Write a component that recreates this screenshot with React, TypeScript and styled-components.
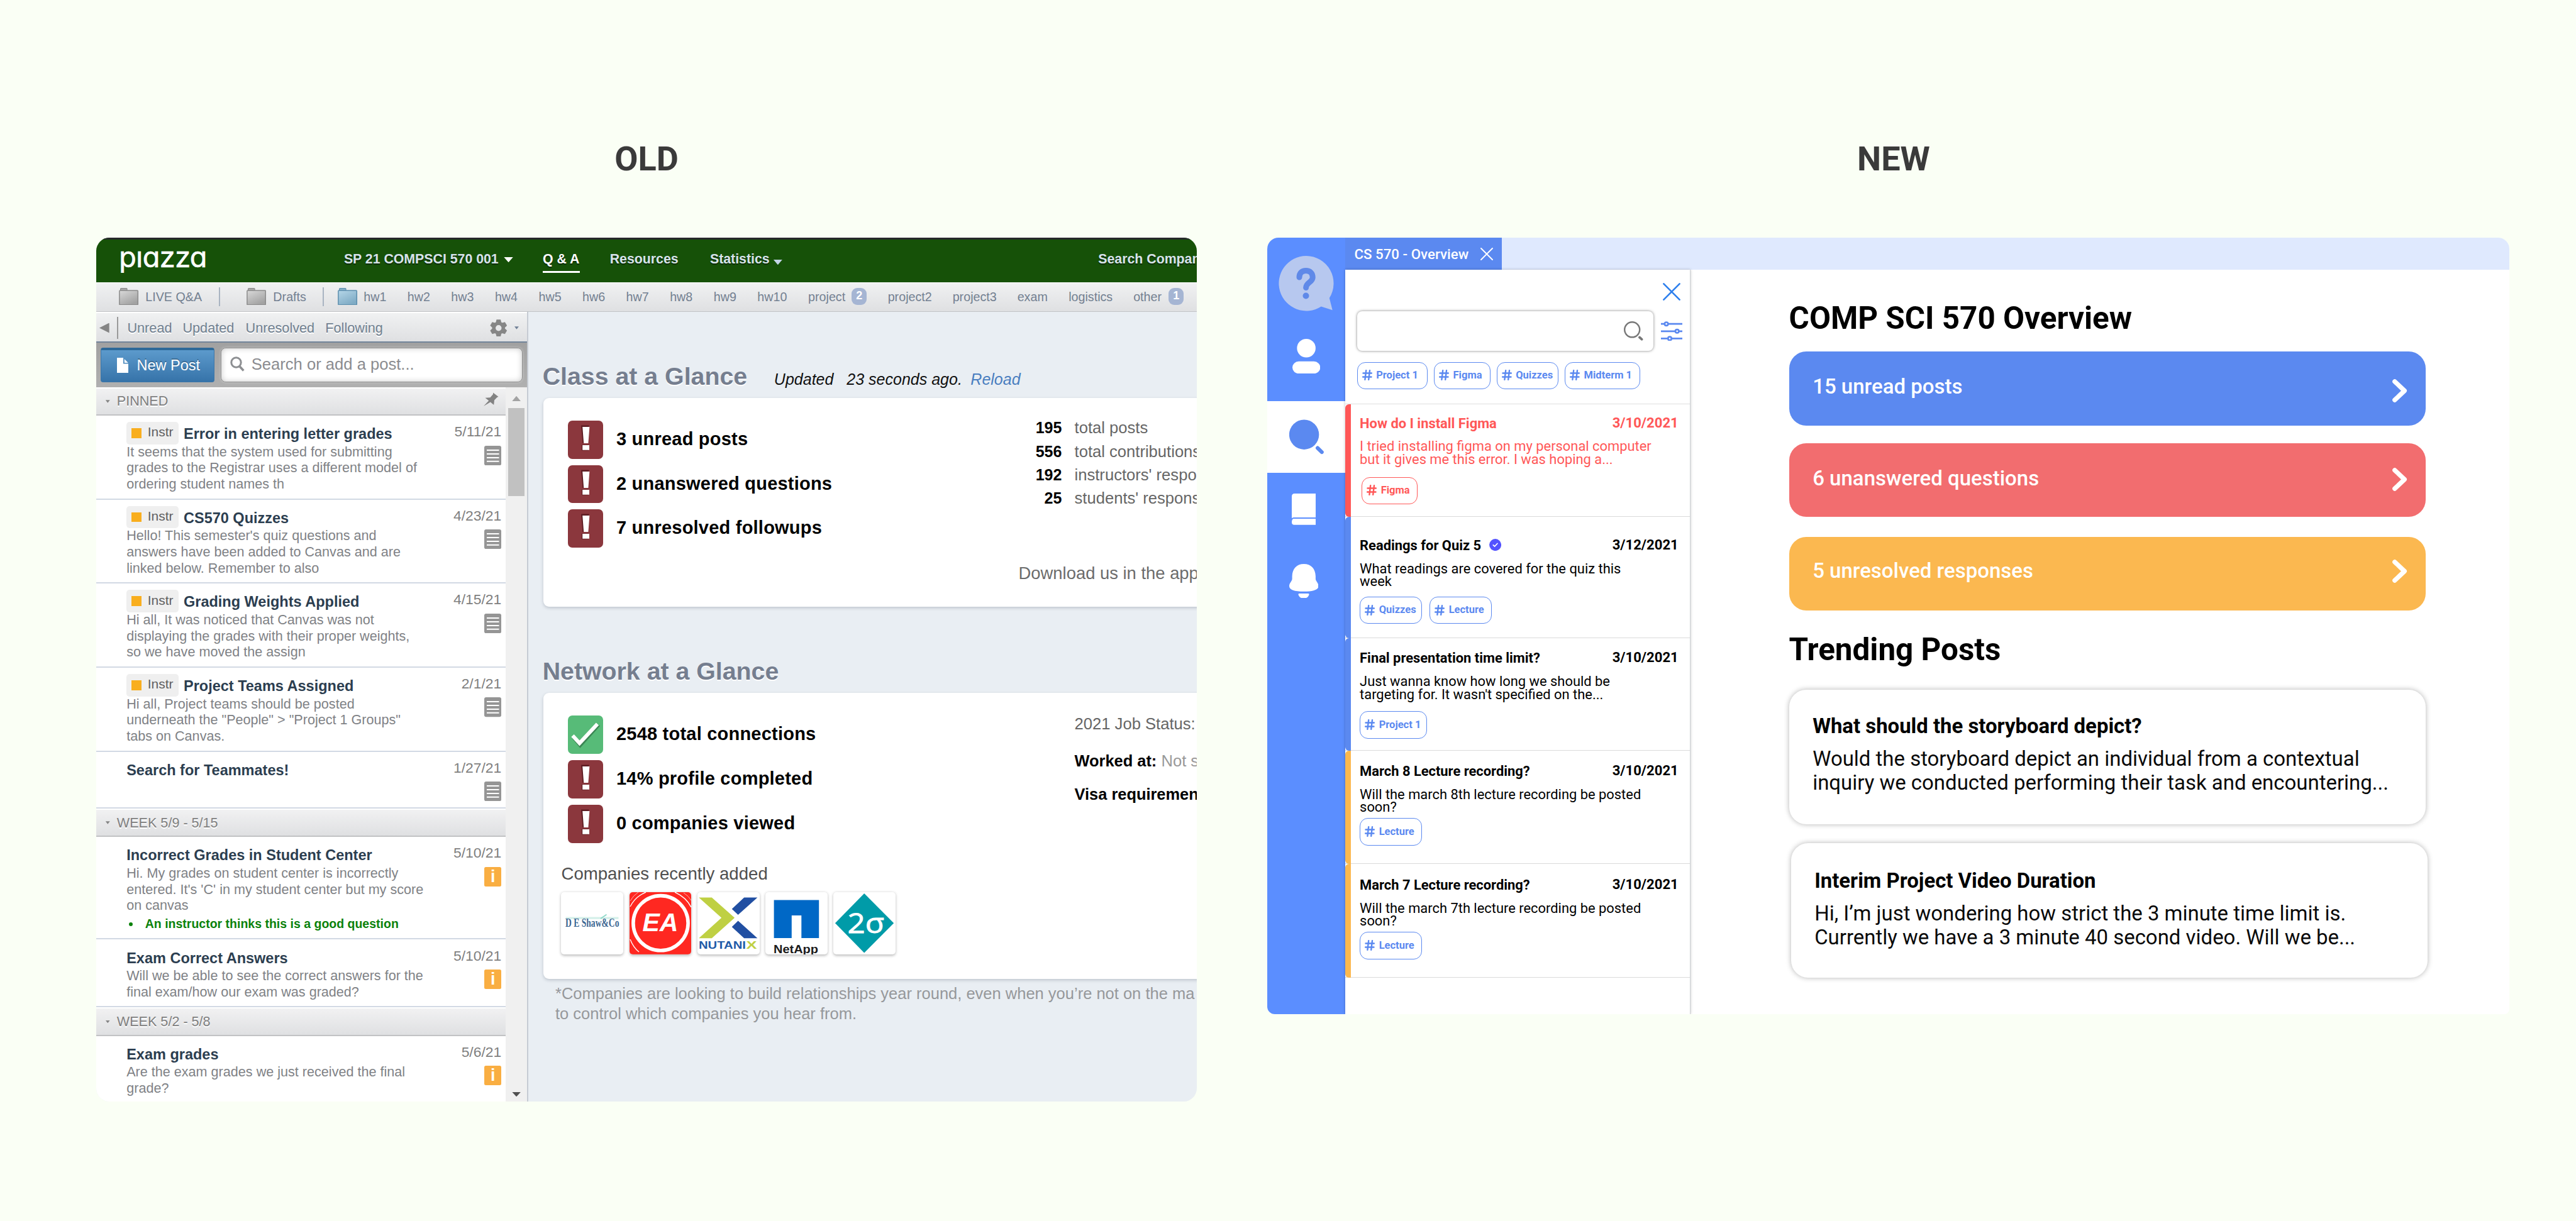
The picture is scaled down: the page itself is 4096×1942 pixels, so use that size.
import React from "react";
import styled, { createGlobalStyle } from "styled-components";

const arial = `"Liberation Sans", Arial, Helvetica, sans-serif`;
const roboto = `Roboto, "Open Sans", sans-serif`;

const GlobalStyle = createGlobalStyle`
  *, *::before, *::after { box-sizing: border-box; }
  html, body { margin: 0; padding: 0; background: #fafff5; }
  svg { display: block; flex: none; }
`;

/* ---------- page ---------- */

const Page = styled.main`
  width: 4096px;
  height: 1942px;
  overflow: hidden;
  background: #fafff5;
  display: flex;
  gap: 112.5px;
  padding: 221.3px 0 0 153.4px;
`;

const Column = styled.section<{ $w: number }>`
  width: ${(p) => p.$w}px;
  flex: none;
`;

const ColumnTitle = styled.h1<{ $shift?: number }>`
  margin: 0 0 93.1px;
  padding-left: ${(p) => p.$shift ?? 0}px;
  font: 700 54px/64px ${roboto};
  color: #3a3a3a;
  text-align: center;
`;

/* ---------- old panel ---------- */

const OldPanel = styled.div`
  height: 1373.9px;
  border-radius: 21px;
  overflow: hidden;
  background: #e9eef3;
  font-family: ${arial};
  display: flex;
  flex-direction: column;
`;

const GreenBar = styled.header`
  height: 70.7px;
  flex: none;
  border-top: 3.9px solid #26292b;
  background: #165108;
  display: flex;
  align-items: flex-start;
  padding-left: 35.9px;
  font: 700 21.3px/63.6px ${arial};
  color: #d7e3ea;
  white-space: nowrap;
  text-shadow: 0 2px 1px rgba(0, 0, 0, 0.45);
`;

const Logo = styled.div`
  width: 357.6px;
  flex: none;
  font: 400 45px/55.4px Inter, sans-serif;
  font-feature-settings: "cv11";
  letter-spacing: -0.5px;
  color: #fff;
  -webkit-text-stroke: 0.6px #fff;
  text-shadow: none;
`;

const NavItem = styled.div<{ $w?: number; $active?: boolean }>`
  flex: none;
  position: relative;
  ${(p) => p.$w && `width: ${p.$w}px;`}
  ${(p) =>
    p.$active &&
    `color: #fff;
     &::after {
       content: "";
       position: absolute;
       left: 0;
       top: 49.2px;
       width: 58.5px;
       height: 3.8px;
       background: #fff;
     }`}
`;

const Caret = styled.span<{ $w: number; $h: number; $color: string; $mt?: number; $mr?: number }>`
  flex: none;
  width: ${(p) => p.$w}px;
  height: ${(p) => p.$h}px;
  margin-top: ${(p) => p.$mt ?? 0}px;
  margin-right: ${(p) => p.$mr ?? 0}px;
  background: ${(p) => p.$color};
  clip-path: polygon(0 0, 100% 0, 50% 100%);
`;

const SearchCompanies = styled(NavItem)`
  margin-left: auto;
  width: 156.6px;
  overflow: hidden;
`;

const FolderBar = styled.nav`
  height: 46.9px;
  flex: none;
  border-top: 1.9px solid #fcfdfd;
  border-bottom: 1.9px solid #c1c3c6;
  background: linear-gradient(#f0f1f2, #dfe0e2);
  display: flex;
  align-items: center;
  padding: 0 0 2px 36.1px;
  font: 400 19.7px/24px ${arial};
  color: #738091;
  white-space: nowrap;
`;

const Cell = styled.div<{ $w: number }>`
  width: ${(p) => p.$w}px;
  flex: none;
`;

const Separator = styled.i`
  display: block;
  width: 2px;
  height: 30px;
  background: #a9b4c2;
`;

const CountBadge = styled.span`
  display: block;
  width: 24px;
  height: 27.3px;
  border-radius: 9px;
  background: #a5b5d3;
  color: #fff;
  font: 700 18px/25px ${arial};
  text-align: center;
`;

const OldBody = styled.div`
  flex: 1;
  min-height: 0;
  display: flex;
`;

const Sidebar = styled.aside`
  width: 686.4px;
  flex: none;
  border-right: 2px solid #c6cbd3;
  background: #fff;
  display: flex;
  flex-direction: column;
`;

const FilterBar = styled.div`
  height: 49.1px;
  flex: none;
  border-top: 2px solid #fff;
  border-bottom: 2px solid #72859a;
  background: linear-gradient(#f0f1f2, #dfe0e2);
  display: flex;
  align-items: center;
  padding: 2px 0 0 4.5px;
  font: 400 21.7px/26px ${arial};
  color: #708090;
  text-shadow: 0 1.8px 0 #fff;
  white-space: nowrap;
`;

const BackArrow = styled.span`
  display: block;
  width: 15.8px;
  height: 16px;
  background: #858585;
  clip-path: polygon(100% 0, 100% 100%, 0 50%);
`;

const FilterDivider = styled.i`
  display: block;
  width: 1.8px;
  height: 35.5px;
  background: #9a9a9a;
`;

const SearchRow = styled.div`
  height: 70.7px;
  flex: none;
  background: linear-gradient(#a1a1a1, #b0b0b0);
  display: flex;
  align-items: center;
  gap: 10.9px;
  padding-left: 6.7px;
`;

const NewPost = styled.button`
  width: 180.5px;
  height: 55px;
  border: 1.8px solid #3a75a8;
  border-top: 4px solid #2d6998;
  border-radius: 4px;
  background: linear-gradient(#5c9acc, #3673a9);
  display: flex;
  align-items: center;
  gap: 13px;
  padding: 0 0 2px 25.4px;
  font: 400 23.5px/30px ${arial};
  color: #fff;
  text-shadow: 0 -1.8px 0 rgba(0, 0, 0, 0.25);
  white-space: nowrap;
`;

const PostSearch = styled.div`
  width: 479.2px;
  height: 54.4px;
  border: 1.8px solid #8f8f8f;
  border-radius: 8px;
  background: #fff;
  box-shadow: inset 0 0 10px rgba(0, 0, 0, 0.22), 0 0 4px rgba(255, 255, 255, 0.35);
  display: flex;
  align-items: center;
  gap: 11.2px;
  padding: 0 0 2px 13.1px;
  font: 400 25.6px/30px ${arial};
  color: #8b8c90;
  white-space: nowrap;
`;

const ListArea = styled.div`
  flex: 1;
  min-height: 0;
  display: flex;
`;

const PostList = styled.div`
  width: 651.1px;
  flex: none;
  overflow: hidden;
`;

const ScrollTrack = styled.div`
  flex: 1;
  background: #f0f0f0;
  display: flex;
  flex-direction: column;
  align-items: center;
  padding: 14px 0 8px;
`;

const ScrollThumb = styled.div`
  width: 25.3px;
  height: 139.5px;
  margin-top: 11px;
  background: #c1c1c1;
`;

const UpArrow = styled.span`
  width: 14px;
  height: 8.4px;
  background: #a3a3a3;
  clip-path: polygon(50% 0, 100% 100%, 0 100%);
`;

const DownArrow = styled.span`
  width: 14px;
  height: 7.6px;
  margin-top: auto;
  background: #505050;
  clip-path: polygon(0 0, 100% 0, 50% 100%);
`;

const SectionHeader = styled.div`
  height: 45.4px;
  border-top: 2.4px solid #fff;
  border-bottom: 2px solid #c1c2c4;
  background: linear-gradient(#f1f1f2, #dfe0e2);
  display: flex;
  align-items: center;
  gap: 11px;
  padding: 0 10.8px 0 14.4px;
  font: 400 21.6px/26px ${arial};
  color: #808080;
  text-shadow: 0 1.8px 0 #fff;
  white-space: nowrap;
`;

const PinSlot = styled.span`
  margin-left: auto;
  margin-top: -6px;
`;

const PostItem = styled.article<{ $h: number }>`
  height: ${(p) => p.$h}px;
  border-bottom: 2px solid #d2d9e4;
  display: flex;
  justify-content: space-between;
  padding: 10.1px 7.2px 0 47.8px;
`;

const PostTitleRow = styled.div`
  height: 34.6px;
  display: flex;
  align-items: flex-start;
  gap: 8px;
`;

const PostTitle = styled.h3`
  margin: 0;
  font: 700 23.5px/38.2px ${arial};
  color: #2c3e50;
  white-space: nowrap;
`;

const InstrBadge = styled.span`
  width: 82.8px;
  height: 35.5px;
  border-radius: 5px;
  background: #efefef;
  display: flex;
  align-items: center;
  gap: 10px;
  padding: 0 0 3px 7.7px;
  font: 400 21px/26px ${arial};
  color: #606060;
  &::before {
    content: "";
    width: 15.8px;
    height: 15.8px;
    margin-top: 3px;
    background: #f9ae1e;
  }
`;

const Snippet = styled.div`
  font: 400 21.6px/25.6px ${arial};
  color: #808286;
  white-space: nowrap;
`;

const Endorsement = styled.div`
  margin-top: 4.3px;
  display: flex;
  align-items: center;
  gap: 20px;
  padding-left: 3.6px;
  font: 700 19.5px/25px ${arial};
  color: #0b820b;
  white-space: nowrap;
  &::before {
    content: "";
    width: 6px;
    height: 6px;
    border-radius: 3px;
    background: #0b820b;
  }
`;

const PostMeta = styled.div`
  display: flex;
  flex-direction: column;
  align-items: flex-end;
  gap: 6.6px;
  font: 400 22.9px/30.7px ${arial};
  color: #808080;
`;

const InfoBadge = styled.span`
  width: 27.1px;
  height: 31px;
  border-radius: 2.5px;
  background: #f9ae42;
  color: #fff;
  font: 700 27px/30px ${arial};
  text-align: center;
`;

const Content = styled.section`
  flex: 1;
  min-width: 0;
  overflow: hidden;
  padding: 78.6px 0 0 23.9px;
`;

const GlanceHead = styled.div<{ $mt?: number }>`
  margin-top: ${(p) => p.$mt ?? 0}px;
  margin-bottom: 12.5px;
  display: flex;
  align-items: baseline;
  height: 46px;
  font: italic 400 25px/46px ${arial};
  color: #111;
  white-space: nowrap;
`;

const GlanceTitle = styled.h2`
  margin: 0 0 0 -1px;
  width: 368.2px;
  font: 700 39.3px/46px ${arial};
  color: #757e8f;
  text-shadow: 0 2px 0 #fff;
`;

const Reload = styled.a`
  color: #4a7ec0;
`;

const Card = styled.div<{ $h: number }>`
  width: 1100px;
  height: ${(p) => p.$h}px;
  border-radius: 9px;
  background: #fff;
  box-shadow: 0 2px 5px rgba(60, 70, 90, 0.25);
`;

const CardTop = styled.div`
  display: flex;
  align-items: flex-start;
`;

const StatusList = styled.ul<{ $w: number }>`
  width: ${(p) => p.$w}px;
  flex: none;
  margin: 0;
  padding: 35.8px 0 0 39px;
  list-style: none;
  display: flex;
  flex-direction: column;
  gap: 10px;
`;

const StatusRow = styled.li`
  height: 60.8px;
  display: flex;
  align-items: center;
  gap: 20.9px;
`;

const StatusIcon = styled.span<{ $ok?: boolean }>`
  width: 56.4px;
  height: 60.8px;
  border-radius: 7px;
  background: ${(p) => (p.$ok ? "#57bb78" : "#8b373d")};
`;

const StatusText = styled.span`
  padding-bottom: 3px;
  font: 700 29px/36px ${arial};
  letter-spacing: 0.22px;
  color: #000;
  white-space: nowrap;
`;

const Stats = styled.div`
  padding-top: 29.4px;
  white-space: nowrap;
`;

const StatRow = styled.div`
  display: flex;
  gap: 20.2px;
  font: 400 25.6px/37.3px ${arial};
  color: #666;
`;

const StatValue = styled.b`
  width: 66.8px;
  font-size: 25px;
  color: #000;
  text-align: right;
`;

const Download = styled.p`
  margin: 80px 0 0 -2px;
  font: 400 27.4px/40px ${arial};
  color: #6c6c6c;
`;

const JobInfo = styled.div`
  padding-top: 28.8px;
  font: 400 25.6px/40px ${arial};
  color: #666;
  white-space: nowrap;
`;

const JobLine = styled.p<{ $mt?: number }>`
  margin: ${(p) => p.$mt ?? 0}px 0 0;
  b {
    color: #000;
    font-size: 25.4px;
  }
  span {
    color: #999;
  }
`;

const CompaniesTitle = styled.p`
  margin: 32.6px 0 11.4px 28.8px;
  font: 400 27.6px/34px ${arial};
  color: #505050;
`;

const Tiles = styled.div`
  display: flex;
  gap: 9.4px;
  padding-left: 28.8px;
`;

const Tile = styled.div`
  width: 98.8px;
  height: 98.9px;
  border-radius: 5px;
  overflow: hidden;
  background: #fff;
  box-shadow: 0 1.5px 4px rgba(0, 0, 0, 0.28);
`;

const Footnote = styled.p`
  margin: 8.2px 0 0 19.3px;
  font: 400 25.5px/31.8px ${arial};
  color: #96989b;
  white-space: nowrap;
`;

/* ---------- new panel ---------- */

const NewPanel = styled.div`
  height: 1234.6px;
  border-radius: 18px 18px 8px 12px;
  overflow: hidden;
  background: #fff;
  font-family: ${roboto};
  display: flex;
`;

const Rail = styled.nav`
  width: 123.2px;
  flex: none;
  background: #5b8eff;
  display: flex;
  flex-direction: column;
  padding-top: 29px;
`;

const RailItem = styled.div<{ $left: number; $mt?: number }>`
  padding-left: ${(p) => p.$left}px;
  margin-top: ${(p) => p.$mt ?? 0}px;
`;

const RailActive = styled.div`
  height: 114px;
  margin-top: 43.8px;
  padding: 29.8px 0 0 34.3px;
  background: #fff;
`;

const Workspace = styled.div`
  flex: 1;
  min-width: 0;
  display: flex;
  flex-direction: column;
`;

const TabBar = styled.div`
  height: 50.5px;
  flex: none;
  background: #dfe9fe;
  display: flex;
`;

const Tab = styled.div`
  width: 249.6px;
  background: #5b89f0;
  display: flex;
  align-items: center;
  gap: 19px;
  padding: 1px 0 0 14.8px;
  font: 500 22.3px/28px ${roboto};
  color: #fff;
  white-space: nowrap;
`;

const WorkBody = styled.div`
  flex: 1;
  min-height: 0;
  display: flex;
`;

const PostPanel = styled.aside`
  width: 549.2px;
  flex: none;
  border-right: 1.5px solid #cfd2d6;
  box-shadow: 0 0 4px rgba(0, 0, 0, 0.25);
  background: #fff;
`;

const PanelTop = styled.div`
  height: 214.4px;
  padding: 21.2px 12.7px 0 19px;
  border-bottom: 1.5px solid #dedede;
`;

const CloseRow = styled.div`
  display: flex;
  justify-content: flex-end;
  padding-right: 2.5px;
  height: 44.9px;
`;

const QueryRow = styled.div`
  display: flex;
  align-items: center;
  gap: 11.7px;
`;

const QueryBox = styled.div`
  width: 471.5px;
  height: 63.3px;
  flex: none;
  border-radius: 8px;
  background: #fff;
  box-shadow: 0 0 4px rgba(0, 0, 0, 0.5);
  display: flex;
  align-items: center;
  justify-content: flex-end;
  padding-right: 15.6px;
`;

const TagRow = styled.div<{ $mt: number; $gap?: number; $ml?: number }>`
  display: flex;
  gap: ${(p) => p.$gap ?? 10}px;
  margin-top: ${(p) => p.$mt}px;
  margin-left: ${(p) => p.$ml ?? 0}px;
`;

const TagBox = styled.span<{ $w: number; $color: string }>`
  width: ${(p) => p.$w}px;
  height: 43.5px;
  border: 1.6px solid ${(p) => p.$color};
  border-radius: 13px;
  display: flex;
  align-items: center;
  gap: 6.6px;
  padding: 0 0 1px 7px;
  font: 700 16.5px/22px ${roboto};
  color: ${(p) => p.$color};
  white-space: nowrap;
`;

const Question = styled.article<{ $h: number; $pt: number; $bar: string; $color?: string }>`
  height: ${(p) => p.$h}px;
  border-bottom: 1.6px solid #dadada;
  padding: ${(p) => p.$pt}px 18px 0 23.5px;
  position: relative;
  color: ${(p) => p.$color ?? "#000"};
  &::before {
    content: "";
    position: absolute;
    left: 0;
    top: 0;
    width: 9.9px;
    height: ${(p) => p.$h}px;
    border-radius: 6px 0 0 6px;
    background: ${(p) => p.$bar};
  }
`;

const QuestionHead = styled.div`
  display: flex;
  align-items: flex-start;
  height: 26px;
  font: 700 21.9px/26px ${roboto};
  white-space: nowrap;
`;

const Verified = styled.span`
  margin: 1.5px 0 0 13px;
`;

const QuestionDate = styled.time`
  margin-left: auto;
  font-size: 22.1px;
  line-height: 23px;
`;

const QuestionText = styled.div`
  margin-top: 13.7px;
  font: 400 21.9px/20.4px ${roboto};
  white-space: nowrap;
`;

const Overview = styled.section`
  flex: 1;
  padding: 48.5px 0 0 156.8px;
`;

const OverviewTitle = styled.h2<{ $mt?: number; $mb: number }>`
  margin: ${(p) => p.$mt ?? 0}px 0 ${(p) => p.$mb}px;
  font: 700 49.4px/58px ${roboto};
  color: #000;
`;

const SummaryButton = styled.div<{ $bg: string; $mt?: number }>`
  width: 1012px;
  height: 117.2px;
  margin-top: ${(p) => p.$mt ?? 0}px;
  border-radius: 27px;
  background: ${(p) => p.$bg};
  display: flex;
  align-items: center;
  justify-content: space-between;
  padding: 0 29px 0 37.6px;
  font: 500 33px/40px ${roboto};
  color: #fff;
`;

const Lifted = styled.span<{ $by: number }>`
  padding-bottom: ${(p) => p.$by * 2}px;
`;

const ChevronSlot = styled.span<{ $dy: number }>`
  margin-top: ${(p) => p.$dy * 2}px;
`;

const TrendCard = styled.article<{ $ml?: number; $mt?: number; $pt: number }>`
  width: 1012px;
  height: 213.9px;
  margin: ${(p) => p.$mt ?? 0}px 0 0 ${(p) => p.$ml ?? 0}px;
  padding: ${(p) => p.$pt}px 0 0 37.6px;
  border-radius: 27px;
  background: #fff;
  box-shadow: 0 0 9px rgba(0, 0, 0, 0.3);
  color: #000;
  white-space: nowrap;
`;

const TrendTitle = styled.h3`
  margin: 0 0 13px;
  font: 700 32.9px/40px ${roboto};
`;

const TrendText = styled.div`
  font: 400 32.95px/38px ${roboto};
  color: #0a0a0a;
`;

/* ---------- icons ---------- */

const FolderIcon = ({ blue }: { blue?: boolean }) => {
  const id = blue ? "folder-blue" : "folder-gray";
  const edge = blue ? "#5d8fae" : "#8b8b8b";
  return (
    <svg width="31.2" height="27.6" viewBox="0 0 31.2 27.6">
      <defs>
        <linearGradient id={id} x1="0" y1="0" x2="0.6" y2="1">
          <stop offset="0" stopColor={blue ? "#b5d6e8" : "#d9d9d9"} />
          <stop offset="1" stopColor={blue ? "#7fabc5" : "#a2a2a2"} />
        </linearGradient>
      </defs>
      <path d="M2.6 4V1.5q0-.8 1-.8h8q1.400 0 1.400.8V4z" fill={blue ? "#8db4cb" : "#adadad"} stroke={edge} strokeWidth="1.2" />
      <rect x=".9" y="4" width="29.4" height="22.800" rx="1" fill={`url(#${id})`} stroke={edge} strokeWidth="1.500" />
      <path d="M.9 26.8h29.4" stroke={edge} strokeWidth="1.600" />
    </svg>
  );
};

const GearIcon = () => (
  <svg width="27.5" height="27.5" viewBox="-14 -14 28 28">
    <g fill="#868686">
      {[0, 60, 120, 180, 240, 300].map((a) => (
        <path key={a} d="M-4.800-8l1.500-5.800h6.600L4.800-8z" transform={`rotate(${a})`} />
      ))}
    </g>
    <circle r="7.600" fill="none" stroke="#868686" strokeWidth="5.500" />
  </svg>
);

const DocPlain = () => (
  <svg width="18" height="24" viewBox="0 0 18 24">
    <path d="M0 0h10v9.500h8V24H0zM11.800 2l6 6h-6z" fill="#fff" />
  </svg>
);

const SmallSearch = () => (
  <svg width="23" height="24" viewBox="0 0 23 24">
    <circle cx="9.500" cy="9.500" r="7.700" fill="none" stroke="#8d8f92" strokeWidth="3" />
    <path d="M14.800 15.500l6.500 7" stroke="#8d8f92" strokeWidth="3.600" />
  </svg>
);

const PinIcon = () => (
  <svg width="25.300" height="22.500" viewBox="0 0 25.300 22.500">
    <path d="M16 .5L24.500 7l-2.200 1-4.300 4.500-.8 7.500-5.400-4.600L1 22l8.200-8.800L3.500 8.700l8-.4L16 3z" fill="#828282" />
  </svg>
);

const NoteIcon = () => (
  <svg width="27.100" height="31.300" viewBox="0 0 27.100 31.300">
    <rect width="27.100" height="31.300" rx="3" fill="#959595" />
    <path d="M4 7h19.500M4 13h19.500M4 19h19.500M4 24.800h19.500" stroke="#fff" strokeWidth="2" />
  </svg>
);

const Bang = () => (
  <svg width="56.400" height="60.800" viewBox="0 0 56.400 60.800">
    <path d="M21 7.500h12.500L31.500 36h-8zM22 38.500h11v9H22z" fill="#5c1c22" />
    <path d="M23.200 10h11.200l-2 26h-7.200zM23.200 39h10.800v7.800H23.200z" fill="#fff" />
  </svg>
);

const Check = () => (
  <svg width="56.400" height="60.800" viewBox="0 0 56.400 60.800">
    <path d="M9 35l10.500 12.500L49 15" fill="none" stroke="#2e6d43" strokeWidth="5.500" opacity=".7" />
    <path d="M7.500 32L18.500 44 47 13.500" fill="none" stroke="#fff" strokeWidth="6" />
  </svg>
);

const QuestionBubble = () => (
  <svg width="87.500" height="87.500" viewBox="0 0 87.500 87.500">
    <path d="M43.700 0a43.700 43.700 0 0 1 37.100 67L85.700 86.200 67.700 80.500A43.700 43.700 0 1 1 43.700 0z" fill="#b7c8ef" />
    <path d="M33 34C33 27 37 23.500 43.500 23.500S54.200 27.500 54.200 34.200C54.200 42 43.600 42 43.600 50.500" fill="none" stroke="#5f89e8" strokeWidth="9" strokeLinecap="round" />
    <circle cx="43.500" cy="63.500" r="5" fill="#5f89e8" />
  </svg>
);

const PersonIcon = () => (
  <svg width="44.300" height="55.200" viewBox="0 0 44.300 55.200" fill="#fff">
    <circle cx="22.100" cy="14.800" r="14.800" />
    <rect y="35.800" width="44.300" height="19.400" rx="10" />
  </svg>
);

const RailSearch = () => (
  <svg width="56" height="56" viewBox="0 0 56 56">
    <circle cx="23.600" cy="24.200" r="23.700" fill="#5b89f0" />
    <path d="M45 45.500l6.800 6.600" stroke="#5b89f0" strokeWidth="6" strokeLinecap="round" />
  </svg>
);

const BookIcon = () => (
  <svg width="38.300" height="49.800" viewBox="0 0 38.300 49.800" fill="#fff">
    <path d="M4.500 0h33.800v37.900H3.500q-2 0-3.500 1.300V4.500Q0 0 4.500 0zM3.500 39.900h34.800v9.900H4Q0 49.800 0 45.500 0 39.900 3.500 39.900z" />
  </svg>
);

const BellIcon = () => (
  <svg width="46.500" height="54.800" viewBox="0 0 46.500 54.800" fill="#fff">
    <path d="M23.200 0C12 0 4.800 7.500 4.600 19.500V23.500C4.600 27.500 0 30 0 35.200 0 41 8 43.800 23.200 43.800S46.500 41 46.500 35.200c0-5.200-4.600-7.700-4.600-11.700v-4C41.700 7.500 34.500 0 23.200 0z" />
    <path d="M15.500 47.100H30.500q1.500.4.900 2.200c-1.400 3.700-4.600 5.500-8.400 5.500s-7-1.800-8.400-5.500q-.6-1.800.9-2.200z" />
  </svg>
);

const Cross = ({ size, color, sw }: { size: number; color: string; sw: number }) => (
  <svg width={size} height={size} viewBox="0 0 20 20">
    <path d="M1 1l18 18M19 1L1 19" stroke={color} strokeWidth={sw} strokeLinecap="round" />
  </svg>
);

const QuerySearch = () => (
  <svg width="31" height="31" viewBox="0 0 31 31">
    <circle cx="13.200" cy="13.300" r="12" fill="none" stroke="#777" strokeWidth="2.400" />
    <path d="M25 25.500l3.500 3.200" stroke="#777" strokeWidth="3.800" strokeLinecap="round" />
  </svg>
);

const Sliders = () => (
  <svg width="34.300" height="31.600" viewBox="0 0 34.300 31.600" fill="#fff" stroke="#5b89f0" strokeWidth="2.700">
    <path d="M0 4.200h34.300M0 15.800h34.300M0 27.400h34.300" />
    <circle cx="8.600" cy="4.200" r="2.700" />
    <circle cx="25.700" cy="15.800" r="2.700" />
    <circle cx="14" cy="27.400" r="2.700" />
  </svg>
);

const Hash = ({ color }: { color: string }) => (
  <svg width="16" height="17" viewBox="0 0 16 17">
    <path d="M6.200 1.200L4.400 15.800M12 1.200l-1.800 14.600M1.500 5.500h13.400M1.100 11.500h13.400" stroke={color} strokeWidth="2.400" strokeLinecap="round" />
  </svg>
);

const VerifiedIcon = () => (
  <svg width="19.200" height="19.200" viewBox="0 0 19.200 19.200">
    <circle cx="9.600" cy="9.600" r="9.500" fill="#5352ff" />
    <path d="M6.300 9.800l2.300 2.300 4.300-4.600" fill="none" stroke="#fff" strokeWidth="1.700" strokeLinecap="round" />
  </svg>
);

const Chevron = () => (
  <svg width="24" height="37" viewBox="0 0 24 37">
    <path d="M3.800 3.800L19.300 18.500 3.800 33.200" fill="none" stroke="#fff" strokeWidth="7.300" strokeLinecap="round" strokeLinejoin="round" />
  </svg>
);

const DEShawLogo = () => (
  <svg width="98.800" height="98.900" viewBox="0 0 98.800 98.900">
    <path d="M7.500 39.400h84v3.400h-84z" fill="#d5f0ea" />
    <path d="M63 42l9.500-6.500" stroke="#8fd9c9" strokeWidth="1.800" />
    <text x="7" y="55.400" fontFamily="Liberation Serif" fontWeight="700" fontSize="18" fill="#3d6792" textLength="85.500" lengthAdjust="spacingAndGlyphs">D E Shaw&amp;Co</text>
  </svg>
);

const EALogo = () => (
  <svg width="98.800" height="98.900" viewBox="0 0 98.800 98.900">
    <rect width="98.800" height="98.900" fill="#ff2821" />
    <circle cx="49.500" cy="49.200" r="43.600" fill="none" stroke="#fff" strokeWidth="5.600" />
    <path d="M1 23Q9 7 26 0M72 0Q90 8 98 24M1 75Q6 88 15 95" fill="none" stroke="#fff" strokeWidth="1.400" />
    <path d="M1 14Q6 5 14 0M86 1Q94 6 98 13" fill="none" stroke="#ffb0ad" strokeWidth="1" />
    <text x="20.500" y="62" fontFamily="Liberation Sans" fontStyle="italic" fontWeight="700" fontSize="40" fill="#fff" textLength="57" lengthAdjust="spacingAndGlyphs">EA</text>
  </svg>
);

const NutanixLogo = () => (
  <svg width="98.800" height="98.900" viewBox="0 0 98.800 98.900">
    <path d="M2.200 8.400h20.600L59.100 40.800 22.800 73.200H2.200l36-32.400z" fill="#bfd043" />
    <path d="M74.200 8.400h21.200L64.600 36l-9.900-9.200zM64.600 45.600l30.800 27.600H74.200l-19.500-18z" fill="#214fa2" />
    <text x="2" y="90" fontFamily="Liberation Sans" fontWeight="700" fontSize="16.500" fill="#1f5ba8" textLength="75" lengthAdjust="spacingAndGlyphs">NUTANI</text>
    <text x="77.500" y="90" fontFamily="Liberation Sans" fontWeight="700" fontSize="16.500" fill="#bfd043" textLength="17" lengthAdjust="spacingAndGlyphs">X</text>
  </svg>
);

const NetAppLogo = () => (
  <svg width="98.800" height="98.900" viewBox="0 0 98.800 98.900">
    <path d="M13.600 12.600h71.600v60.400H57.300V37H41.800v36H13.600z" fill="#0068c6" />
    <text x="13" y="96.600" fontFamily="Liberation Sans" fontWeight="700" fontSize="19" fill="#1c1c1c" textLength="71" lengthAdjust="spacingAndGlyphs">NetApp</text>
  </svg>
);

const TwoSigmaLogo = () => (
  <svg width="98.800" height="98.900" viewBox="0 0 98.800 98.900">
    <path d="M49.200 2l47 47.200-47 47.200L2.900 49.200z" fill="#009ba8" />
    <text x="22.500" y="64.800" fontFamily="Open Sans" fontSize="43" fill="#fff" stroke="#fff" strokeWidth=".8" textLength="58.500" lengthAdjust="spacingAndGlyphs">2σ</text>
  </svg>
);

/* ---------- data ---------- */

interface Post {
  title: string;
  date: string;
  h: number;
  instr?: boolean;
  info?: boolean;
  lines: string[];
  endorsed?: string;
}

const pinned: Post[] = [
  { title: "Error in entering letter grades", date: "5/11/21", h: 133.6, instr: true, lines: ["It seems that the system used for submitting", "grades to the Registrar uses a different model of", "ordering student names th"] },
  { title: "CS570 Quizzes", date: "4/23/21", h: 133.6, instr: true, lines: ["Hello! This semester's quiz questions and", "answers have been added to Canvas and are", "linked below. Remember to also"] },
  { title: "Grading Weights Applied", date: "4/15/21", h: 133.6, instr: true, lines: ["Hi all, It was noticed that Canvas was not", "displaying the grades with their proper weights,", "so we have moved the assign"] },
  { title: "Project Teams Assigned", date: "2/1/21", h: 133.6, instr: true, lines: ["Hi all, Project teams should be posted", 'underneath the "People" > "Project 1 Groups"', "tabs on Canvas."] },
  { title: "Search for Teammates!", date: "1/27/21", h: 90.4, lines: [] },
];

const weekTwo: Post[] = [
  { title: "Incorrect Grades in Student Center", date: "5/10/21", h: 163.2, info: true, lines: ["Hi. My grades on student center is incorrectly", "entered. It's 'C' in my student center but my score", "on canvas"], endorsed: "An instructor thinks this is a good question" },
  { title: "Exam Correct Answers", date: "5/10/21", h: 107.9, info: true, lines: ["Will we be able to see the correct answers for the", "final exam/how our exam was graded?"] },
];

const weekOne: Post[] = [
  { title: "Exam grades", date: "5/6/21", h: 120, info: true, lines: ["Are the exam grades we just received the final", "grade?"] },
];

const homework = ["hw1", "hw2", "hw3", "hw4", "hw5", "hw6", "hw7", "hw8", "hw9"];

const BLUE = "#5b89f0";
const RED = "#ff5757";
const ORANGE = "#fbb850";

interface QuestionData {
  title: string;
  date: string;
  h: number;
  pt: number;
  tagTop: number;
  bar: string;
  color?: string;
  verified?: boolean;
  lines: string[];
  tags: [string, number][];
}

const questions: QuestionData[] = [
  { title: "How do I install Figma", date: "3/10/2021", h: 179.2, pt: 17.4, tagTop: 17.5, bar: RED, color: RED, lines: ["I tried installing figma on my personal computer", "but it gives me this error. I was hoping a..."], tags: [["Figma", 88.5]] },
  { title: "Readings for Quiz 5", date: "3/12/2021", h: 192.6, pt: 32.7, tagTop: 13.3, bar: BLUE, verified: true, lines: ["What readings are covered for the quiz this", "week"], tags: [["Quizzes", 98.8], ["Lecture", 98.8]] },
  { title: "Final presentation time limit?", date: "3/10/2021", h: 178.8, pt: 19.4, tagTop: 16.4, bar: BLUE, lines: ["Just wanna know how long we should be", "targeting for. It wasn't specified on the..."], tags: [["Project 1", 107]] },
  { title: "March 8 Lecture recording?", date: "3/10/2021", h: 180.4, pt: 20.5, tagTop: 6.6, bar: ORANGE, lines: ["Will the march 8th lecture recording be posted", "soon?"], tags: [["Lecture", 98.8]] },
  { title: "March 7 Lecture recording?", date: "3/10/2021", h: 180.9, pt: 21, tagTop: 6.6, bar: ORANGE, lines: ["Will the march 7th lecture recording be posted", "soon?"], tags: [["Lecture", 98.8]] },
];

/* ---------- composed parts ---------- */

const PostRow = ({ post }: { post: Post }) => (
  <PostItem $h={post.h}>
    <div>
      <PostTitleRow>
        {post.instr && <InstrBadge>Instr</InstrBadge>}
        <PostTitle>{post.title}</PostTitle>
      </PostTitleRow>
      {post.lines.map((l) => (
        <Snippet key={l}>{l}</Snippet>
      ))}
      {post.endorsed && <Endorsement>{post.endorsed}</Endorsement>}
    </div>
    <PostMeta>
      {post.date}
      {post.info ? <InfoBadge>i</InfoBadge> : <NoteIcon />}
    </PostMeta>
  </PostItem>
);

const Section = ({ label, pin }: { label: string; pin?: boolean }) => (
  <SectionHeader>
    <Caret $w={7} $h={4.5} $color="#858585" />
    {label}
    {pin && (
      <PinSlot>
        <PinIcon />
      </PinSlot>
    )}
  </SectionHeader>
);

const Status = ({ text, ok }: { text: string; ok?: boolean }) => (
  <StatusRow>
    <StatusIcon $ok={ok}>{ok ? <Check /> : <Bang />}</StatusIcon>
    <StatusText>{text}</StatusText>
  </StatusRow>
);

const Tag = ({ label, w, color = BLUE }: { label: string; w: number; color?: string }) => (
  <TagBox $w={w} $color={color}>
    <Hash color={color} />
    {label}
  </TagBox>
);

const QuestionCard = ({ q }: { q: QuestionData }) => (
  <Question $h={q.h} $pt={q.pt} $bar={q.bar} $color={q.color}>
    <QuestionHead>
      {q.title}
      {q.verified && (
        <Verified>
          <VerifiedIcon />
        </Verified>
      )}
      <QuestionDate>{q.date}</QuestionDate>
    </QuestionHead>
    <QuestionText>
      {q.lines.map((l) => (
        <div key={l}>{l}</div>
      ))}
    </QuestionText>
    <TagRow $mt={q.tagTop} $gap={12.2} $ml={q.color ? 3 : 0}>
      {q.tags.map(([label, w]) => (
        <Tag key={label} label={label} w={w} color={q.color} />
      ))}
    </TagRow>
  </Question>
);

const OldDesign = () => (
  <OldPanel>
    <GreenBar>
      <Logo>pıazza</Logo>
      <NavItem $w={254}>SP 21 COMPSCI 570 001</NavItem>
      <Caret $w={15.3} $h={8.6} $color="#fff" $mt={27.2} $mr={46.9} />
      <NavItem $w={106.6} $active>
        Q &amp; A
      </NavItem>
      <NavItem $w={159.3}>Resources</NavItem>
      <NavItem $w={100.9}>Statistics</NavItem>
      <Caret $w={14} $h={8.2} $color="#c3d3e6" $mt={31.6} />
      <SearchCompanies>Search Compan</SearchCompanies>
    </GreenBar>
    <FolderBar>
      <Cell $w={41.8}><FolderIcon /></Cell>
      <Cell $w={116.7}>LIVE Q&amp;A</Cell>
      <Cell $w={43.6}><Separator /></Cell>
      <Cell $w={42.8}><FolderIcon /></Cell>
      <Cell $w={78.6}>Drafts</Cell>
      <Cell $w={24.4}><Separator /></Cell>
      <Cell $w={40.9}><FolderIcon blue /></Cell>
      {homework.map((h) => (
        <Cell key={h} $w={69.57}>{h}</Cell>
      ))}
      <Cell $w={80.8}>hw10</Cell>
      <Cell $w={69.2}>project</Cell>
      <Cell $w={57.4}><CountBadge>2</CountBadge></Cell>
      <Cell $w={103}>project2</Cell>
      <Cell $w={103}>project3</Cell>
      <Cell $w={81.5}>exam</Cell>
      <Cell $w={103}>logistics</Cell>
      <Cell $w={56}>other</Cell>
      <CountBadge>1</CountBadge>
    </FolderBar>
    <OldBody>
      <Sidebar>
        <FilterBar>
          <Cell $w={28.1}><BackArrow /></Cell>
          <Cell $w={16.4}><FilterDivider /></Cell>
          <Cell $w={88}>Unread</Cell>
          <Cell $w={100.1}>Updated</Cell>
          <Cell $w={126.8}>Unresolved</Cell>
          <Cell $w={261.5}>Following</Cell>
          <Cell $w={39.2}><GearIcon /></Cell>
          <Caret $w={7} $h={4.6} $color="#708096" />
        </FilterBar>
        <SearchRow>
          <NewPost>
            <DocPlain />
            New Post
          </NewPost>
          <PostSearch>
            <SmallSearch />
            Search or add a post...
          </PostSearch>
        </SearchRow>
        <ListArea>
          <PostList>
            <Section label="PINNED" pin />
            {pinned.map((p) => (
              <PostRow key={p.title} post={p} />
            ))}
            <Section label="WEEK 5/9 - 5/15" />
            {weekTwo.map((p) => (
              <PostRow key={p.title} post={p} />
            ))}
            <Section label="WEEK 5/2 - 5/8" />
            {weekOne.map((p) => (
              <PostRow key={p.title} post={p} />
            ))}
          </PostList>
          <ScrollTrack>
            <UpArrow />
            <ScrollThumb />
            <DownArrow />
          </ScrollTrack>
        </ListArea>
      </Sidebar>
      <Content>
        <GlanceHead>
          <GlanceTitle>Class at a Glance</GlanceTitle>
          <Cell $w={115.5}>Updated</Cell>
          <Cell $w={197}>23 seconds ago.</Cell>
          <Reload>Reload</Reload>
        </GlanceHead>
        <Card $h={332.3}>
          <CardTop>
            <StatusList $w={757.9}>
              <Status text="3 unread posts" />
              <Status text="2 unanswered questions" />
              <Status text="7 unresolved followups" />
            </StatusList>
            <Stats>
              <StatRow><StatValue>195</StatValue>total posts</StatRow>
              <StatRow><StatValue>556</StatValue>total contributions</StatRow>
              <StatRow><StatValue>192</StatValue>instructors' respo</StatRow>
              <StatRow><StatValue>25</StatValue>students' respons</StatRow>
              <Download>Download us in the app</Download>
            </Stats>
          </CardTop>
        </Card>
        <GlanceHead $mt={78.6}>
          <GlanceTitle>Network at a Glance</GlanceTitle>
        </GlanceHead>
        <Card $h={454.4}>
          <CardTop>
            <StatusList $w={844.9}>
              <Status text="2548 total connections" ok />
              <Status text="14% profile completed" />
              <Status text="0 companies viewed" />
            </StatusList>
            <JobInfo>
              <JobLine>2021 Job Status:</JobLine>
              <JobLine $mt={18.6}><b>Worked at:</b> <span>Not s</span></JobLine>
              <JobLine $mt={13.2}><b>Visa requiremen</b></JobLine>
            </JobInfo>
          </CardTop>
          <CompaniesTitle>Companies recently added</CompaniesTitle>
          <Tiles>
            <Tile><DEShawLogo /></Tile>
            <Tile><EALogo /></Tile>
            <Tile><NutanixLogo /></Tile>
            <Tile><NetAppLogo /></Tile>
            <Tile><TwoSigmaLogo /></Tile>
          </Tiles>
        </Card>
        <Footnote>
          *Companies are looking to build relationships year round, even when you’re not on the ma
          <br />
          to control which companies you hear from.
        </Footnote>
      </Content>
    </OldBody>
  </OldPanel>
);

const NewDesign = () => (
  <NewPanel>
    <Rail>
      <RailItem $left={18.1}><QuestionBubble /></RailItem>
      <RailItem $left={39.7} $mt={43.7}><PersonIcon /></RailItem>
      <RailActive><RailSearch /></RailActive>
      <RailItem $left={38.4} $mt={33.7}><BookIcon /></RailItem>
      <RailItem $left={34.3} $mt={61.6}><BellIcon /></RailItem>
    </Rail>
    <Workspace>
      <TabBar>
        <Tab>
          CS 570 - Overview
          <Cross size={20} color="#fff" sw={1.9} />
        </Tab>
      </TabBar>
      <WorkBody>
        <PostPanel>
          <PanelTop>
            <CloseRow><Cross size={28} color="#2f80ed" sw={1.9} /></CloseRow>
            <QueryRow>
              <QueryBox><QuerySearch /></QueryBox>
              <Sliders />
            </QueryRow>
            <TagRow $mt={17.3}>
              <Tag label="Project 1" w={112.4} />
              <Tag label="Figma" w={89.6} />
              <Tag label="Quizzes" w={98.4} />
              <Tag label="Midterm 1" w={120.5} />
            </TagRow>
          </PanelTop>
          {questions.map((q) => (
            <QuestionCard key={q.title} q={q} />
          ))}
        </PostPanel>
        <Overview>
          <OverviewTitle $mb={24.1}>COMP SCI 570 Overview</OverviewTitle>
          <SummaryButton $bg={BLUE}>
            <Lifted $by={2.6}>15 unread posts</Lifted>
            <ChevronSlot $dy={3.8}><Chevron /></ChevronSlot>
          </SummaryButton>
          <SummaryButton $bg="#f26d6f" $mt={28}>
            <Lifted $by={1.8}>6 unanswered questions</Lifted>
            <ChevronSlot $dy={-0.5}><Chevron /></ChevronSlot>
          </SummaryButton>
          <SummaryButton $bg={ORANGE} $mt={31.7}>
            <Lifted $by={4.5}>5 unresolved responses</Lifted>
            <ChevronSlot $dy={-3.7}><Chevron /></ChevronSlot>
          </SummaryButton>
          <OverviewTitle $mt={33.5} $mb={34.6}>Trending Posts</OverviewTitle>
          <TrendCard $pt={38.5}>
            <TrendTitle>What should the storyboard depict?</TrendTitle>
            <TrendText>Would the storyboard depict an individual from a contextual</TrendText>
            <TrendText>inquiry we conducted performing their task and encountering...</TrendText>
          </TrendCard>
          <TrendCard $pt={40} $mt={30.2} $ml={3}>
            <TrendTitle>Interim Project Video Duration</TrendTitle>
            <TrendText>Hi, I’m just wondering how strict the 3 minute time limit is.</TrendText>
            <TrendText>Currently we have a 3 minute 40 second video. Will we be...</TrendText>
          </TrendCard>
        </Overview>
      </WorkBody>
    </Workspace>
  </NewPanel>
);

export default function App() {
  return (
    <>
      <GlobalStyle />
      <Page>
        <Column $w={1749.5}>
          <ColumnTitle>OLD</ColumnTitle>
          <OldDesign />
        </Column>
        <Column $w={1974.2}>
          <ColumnTitle $shift={17}>NEW</ColumnTitle>
          <NewDesign />
        </Column>
      </Page>
    </>
  );
}
